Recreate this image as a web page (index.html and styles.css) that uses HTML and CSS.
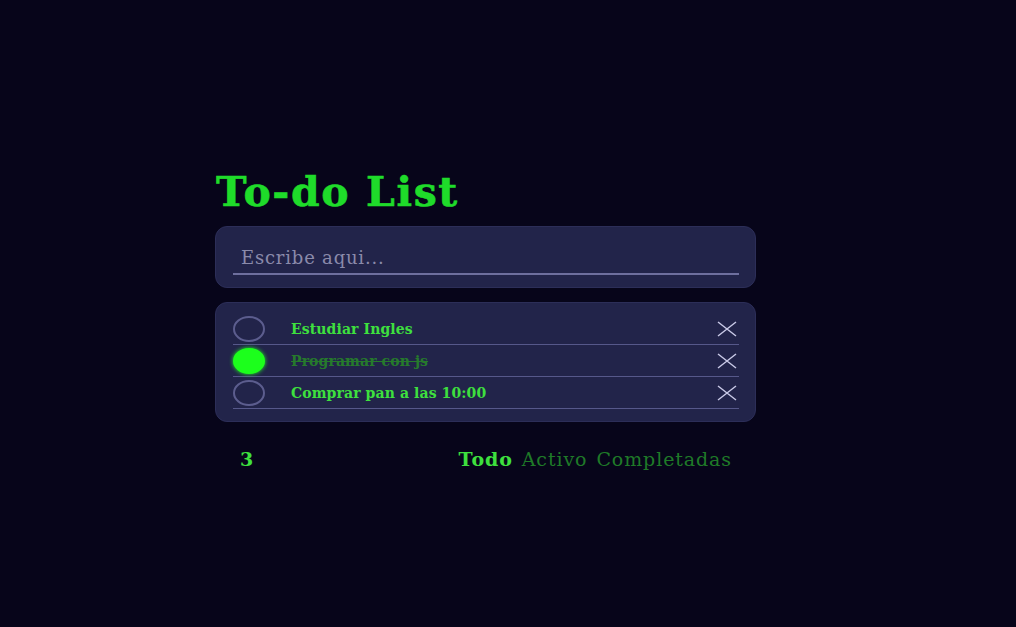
FILE: index.html
```html
<!DOCTYPE html>
<html lang="es">
<head>
<meta charset="utf-8">
<title>To-do List</title>
<link rel="stylesheet" href="styles.css">
</head>
<body>
<main class="app">
  <h1 class="title">To-do List</h1>
  <div class="card input-card">
    <input class="new-todo" type="text" placeholder="Escribe aqui...">
  </div>
  <ul class="card list">
    <li class="item">
      <span class="check"></span>
      <span class="text">Estudiar Ingles</span>
      <span class="remove"><svg viewBox="0 0 20 16" width="20" height="16"><path d="M1 1 L19 15 M19 1 L1 15"/></svg></span>
    </li>
    <li class="item done">
      <span class="check"></span>
      <span class="text">Programar con js</span>
      <span class="remove"><svg viewBox="0 0 20 16" width="20" height="16"><path d="M1 1 L19 15 M19 1 L1 15"/></svg></span>
    </li>
    <li class="item">
      <span class="check"></span>
      <span class="text">Comprar pan a las 10:00</span>
      <span class="remove"><svg viewBox="0 0 20 16" width="20" height="16"><path d="M1 1 L19 15 M19 1 L1 15"/></svg></span>
    </li>
  </ul>
  <footer class="footer">
    <span class="count">3</span>
    <nav class="filters">
      <span class="filter active">Todo</span>
      <span class="filter">Activo</span>
      <span class="filter">Completadas</span>
    </nav>
  </footer>
</main>
</body>
</html>
```

FILE: styles.css
```css
html, body {
  margin: 0;
  padding: 0;
  height: 100%;
}
body {
  background: #07051a;
  font-family: "DejaVu Serif", "Liberation Serif", serif;
}
.app {
  width: 541px;
  margin-left: 215px;
  padding-top: 170px;
  display: flex;
  flex-direction: column;
}
.title {
  margin: 0 0 12px 1px;
  font-size: 41px;
  line-height: 44px;
  font-weight: bold;
  color: #1fdc2a;
  letter-spacing: 1.6px;
  -webkit-text-stroke: 0.6px #1fdc2a;
}
.card {
  background: #22244a;
  border: 1px solid #2c2e58;
  border-radius: 12px;
  box-sizing: border-box;
}
.input-card {
  height: 62px;
  padding: 16px 16px 0 17px;
}
.new-todo {
  display: block;
  width: 100%;
  box-sizing: border-box;
  background: transparent;
  border: none;
  border-bottom: 2px solid #6e6f9e;
  outline: none;
  font-family: "DejaVu Serif", serif;
  font-size: 18px;
  letter-spacing: 0.8px;
  height: 32px;
  padding: 0 0 2px 8px;
  color: #c8c8e0;
}
.new-todo::placeholder {
  color: #8a8aaa;
}
.list {
  list-style: none;
  margin: 14px 0 0 0;
  padding: 10px 16px 12px 17px;
}
.item {
  display: flex;
  align-items: center;
  height: 32px;
  border-bottom: 1px solid #56588a;
  box-sizing: border-box;
}
.check {
  width: 32px;
  height: 26px;
  box-sizing: border-box;
  border: 2px solid #5c5d8e;
  border-radius: 50%;
  flex: none;
}
.done .check {
  background: #1cff1c;
  border-color: #1cff1c;
  box-shadow: 0 0 4px #22ff22;
}
.text {
  margin-left: 26px;
  flex: 1;
  font-size: 14px;
  font-weight: bold;
  color: #3ee03e;
  letter-spacing: 0.1px;
}
.done .text {
  color: #267a2c;
  text-decoration: line-through;
}
.remove {
  width: 20px;
  height: 16px;
  margin-right: 2px;
  display: flex;
}
.remove svg path {
  stroke: #c8c8e6;
  stroke-width: 1.5;
  fill: none;
}
.footer {
  display: flex;
  align-items: center;
  justify-content: space-between;
  padding: 26px 24px 0 25px;
  font-size: 19px;
}
.count {
  color: #3ee03e;
  font-weight: bold;
}
.filters {
  display: flex;
  gap: 9px;
  letter-spacing: 0.9px;
}
.filter {
  color: #1f7a28;
}
.filter.active {
  color: #3ee03e;
  font-weight: bold;
}
```
